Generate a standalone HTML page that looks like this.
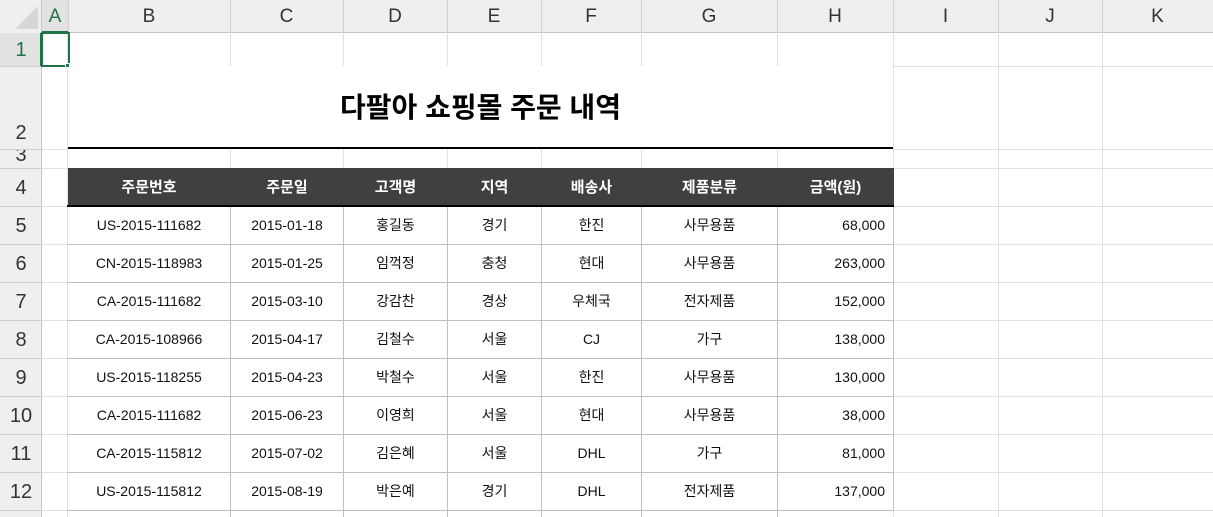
<!DOCTYPE html>
<html><head><meta charset="utf-8"><style>
*{margin:0;padding:0;box-sizing:border-box}
html,body{width:1213px;height:517px;overflow:hidden}
body{background:#fff;position:relative;font-family:"Liberation Sans","Noto Sans CJK KR",sans-serif}
.a{position:absolute}
.vl{position:absolute;width:1px;background:#e1e1e1}
.hl{position:absolute;height:1px;background:#e1e1e1}
.ch{position:absolute;top:0;height:33px;line-height:34px;text-align:center;font-size:19px;color:#333;font-family:"Liberation Sans",sans-serif}
.rh{position:absolute;left:0;width:42px;text-align:center;font-size:20px;color:#333;font-family:"Liberation Sans",sans-serif}
table{position:absolute;left:67px;top:168px;border-collapse:collapse;table-layout:fixed}
td{height:38px;border:1px solid #bfbfbf;text-align:center;font-size:14px;color:#111;padding:0}
td:last-child{text-align:right;padding-right:8px}
td:first-child{border-left-color:#e1e1e1}
th{height:38px;background:#404040;color:#fff;font-size:15px;font-weight:bold;border-bottom:2px solid #000}
</style></head><body>
<div class="a" style="left:0;top:0;width:1213px;height:33px;background:#efefef;border-bottom:1px solid #c6c6c6"></div>
<div class="a" style="left:0;top:0;width:42px;height:517px;background:#efefef;border-right:1px solid #c6c6c6"></div>
<div class="a" style="left:42px;top:0;width:26px;height:33px;background:#e2e2e2;border-bottom:2px solid #217346"></div>
<div class="a" style="left:0;top:33px;width:42px;height:33px;background:#e2e2e2;border-right:2px solid #217346"></div>
<svg class="a" style="left:12px;top:4px" width="28" height="26"><polygon points="26,2 26,25 3,25" fill="#d6d6d6"/></svg>
<div class="ch" style="left:42px;width:26px;color:#217346">A</div>
<div class="ch" style="left:68px;width:162px">B</div>
<div class="ch" style="left:230px;width:113px">C</div>
<div class="ch" style="left:343px;width:104px">D</div>
<div class="ch" style="left:447px;width:94px">E</div>
<div class="ch" style="left:541px;width:100px">F</div>
<div class="ch" style="left:641px;width:136px">G</div>
<div class="ch" style="left:777px;width:116px">H</div>
<div class="ch" style="left:893px;width:105px">I</div>
<div class="ch" style="left:998px;width:104px">J</div>
<div class="ch" style="left:1102px;width:111px">K</div>
<div class="a" style="left:68px;top:0;width:1px;height:33px;background:#d0d0d0"></div>
<div class="a" style="left:230px;top:0;width:1px;height:33px;background:#d0d0d0"></div>
<div class="a" style="left:343px;top:0;width:1px;height:33px;background:#d0d0d0"></div>
<div class="a" style="left:447px;top:0;width:1px;height:33px;background:#d0d0d0"></div>
<div class="a" style="left:541px;top:0;width:1px;height:33px;background:#d0d0d0"></div>
<div class="a" style="left:641px;top:0;width:1px;height:33px;background:#d0d0d0"></div>
<div class="a" style="left:777px;top:0;width:1px;height:33px;background:#d0d0d0"></div>
<div class="a" style="left:893px;top:0;width:1px;height:33px;background:#d0d0d0"></div>
<div class="a" style="left:998px;top:0;width:1px;height:33px;background:#d0d0d0"></div>
<div class="a" style="left:1102px;top:0;width:1px;height:33px;background:#d0d0d0"></div>
<div class="rh" style="top:33px;height:33px;line-height:34px;color:#217346">1</div>
<div class="rh" style="top:66px;height:83px;line-height:134px">2</div>
<div class="rh" style="top:149px;height:19px;line-height:12px;overflow:hidden">3</div>
<div class="rh" style="top:168px;height:38px;line-height:40px">4</div>
<div class="rh" style="top:206px;height:38px;line-height:40px">5</div>
<div class="rh" style="top:244px;height:38px;line-height:40px">6</div>
<div class="rh" style="top:282px;height:38px;line-height:40px">7</div>
<div class="rh" style="top:320px;height:38px;line-height:40px">8</div>
<div class="rh" style="top:358px;height:38px;line-height:40px">9</div>
<div class="rh" style="top:396px;height:38px;line-height:40px">10</div>
<div class="rh" style="top:434px;height:38px;line-height:40px">11</div>
<div class="rh" style="top:472px;height:38px;line-height:40px">12</div>
<div class="a" style="left:0;top:66px;width:42px;height:1px;background:#d0d0d0"></div>
<div class="a" style="left:0;top:149px;width:42px;height:1px;background:#d0d0d0"></div>
<div class="a" style="left:0;top:168px;width:42px;height:1px;background:#d0d0d0"></div>
<div class="a" style="left:0;top:206px;width:42px;height:1px;background:#d0d0d0"></div>
<div class="a" style="left:0;top:244px;width:42px;height:1px;background:#d0d0d0"></div>
<div class="a" style="left:0;top:282px;width:42px;height:1px;background:#d0d0d0"></div>
<div class="a" style="left:0;top:320px;width:42px;height:1px;background:#d0d0d0"></div>
<div class="a" style="left:0;top:358px;width:42px;height:1px;background:#d0d0d0"></div>
<div class="a" style="left:0;top:396px;width:42px;height:1px;background:#d0d0d0"></div>
<div class="a" style="left:0;top:434px;width:42px;height:1px;background:#d0d0d0"></div>
<div class="a" style="left:0;top:472px;width:42px;height:1px;background:#d0d0d0"></div>
<div class="a" style="left:0;top:510px;width:42px;height:1px;background:#d0d0d0"></div>
<div class="vl" style="left:68px;top:33px;height:33px"></div>
<div class="vl" style="left:230px;top:33px;height:33px"></div><div class="vl" style="left:230px;top:149px;height:19px"></div>
<div class="vl" style="left:343px;top:33px;height:33px"></div><div class="vl" style="left:343px;top:149px;height:19px"></div>
<div class="vl" style="left:447px;top:33px;height:33px"></div><div class="vl" style="left:447px;top:149px;height:19px"></div>
<div class="vl" style="left:541px;top:33px;height:33px"></div><div class="vl" style="left:541px;top:149px;height:19px"></div>
<div class="vl" style="left:641px;top:33px;height:33px"></div><div class="vl" style="left:641px;top:149px;height:19px"></div>
<div class="vl" style="left:777px;top:33px;height:33px"></div><div class="vl" style="left:777px;top:149px;height:19px"></div>
<div class="vl" style="left:67px;top:33px;height:484px"></div>
<div class="vl" style="left:893px;top:33px;height:484px"></div>
<div class="vl" style="left:998px;top:33px;height:484px"></div>
<div class="vl" style="left:1102px;top:33px;height:484px"></div>
<div class="hl" style="left:42px;top:66px;width:1171px"></div>
<div class="hl" style="left:893px;top:149px;width:320px"></div>
<div class="hl" style="left:42px;top:168px;width:1171px"></div>
<div class="hl" style="left:42px;top:206px;width:1171px"></div>
<div class="hl" style="left:42px;top:244px;width:1171px"></div>
<div class="hl" style="left:42px;top:282px;width:1171px"></div>
<div class="hl" style="left:42px;top:320px;width:1171px"></div>
<div class="hl" style="left:42px;top:358px;width:1171px"></div>
<div class="hl" style="left:42px;top:396px;width:1171px"></div>
<div class="hl" style="left:42px;top:434px;width:1171px"></div>
<div class="hl" style="left:42px;top:472px;width:1171px"></div>
<div class="hl" style="left:42px;top:510px;width:1171px"></div>
<div class="hl" style="left:42px;top:149px;width:26px"></div>
<div class="a" style="left:68px;top:66px;width:825px;height:81px;background:#fff;text-align:center;font-size:28px;font-weight:bold;line-height:84px;color:#000">다팔아 쇼핑몰 주문 내역</div>
<div class="a" style="left:68px;top:147px;width:825px;height:2px;background:#000"></div>
<div class="a" style="left:41px;top:32px;width:29px;height:35px;border:2px solid #217346"></div>
<div class="a" style="left:65px;top:63px;width:5px;height:5px;background:#217346;border:1px solid #fff"></div>
<table>
<colgroup><col style="width:163px"><col style="width:113px"><col style="width:104px"><col style="width:94px"><col style="width:100px"><col style="width:136px"><col style="width:116px"></colgroup>
<tr><th>주문번호</th><th>주문일</th><th>고객명</th><th>지역</th><th>배송사</th><th>제품분류</th><th>금액(원)</th></tr>
<tr><td>US-2015-111682</td><td>2015-01-18</td><td>홍길동</td><td>경기</td><td>한진</td><td>사무용품</td><td>68,000</td></tr>
<tr><td>CN-2015-118983</td><td>2015-01-25</td><td>임꺽정</td><td>충청</td><td>현대</td><td>사무용품</td><td>263,000</td></tr>
<tr><td>CA-2015-111682</td><td>2015-03-10</td><td>강감찬</td><td>경상</td><td>우체국</td><td>전자제품</td><td>152,000</td></tr>
<tr><td>CA-2015-108966</td><td>2015-04-17</td><td>김철수</td><td>서울</td><td>CJ</td><td>가구</td><td>138,000</td></tr>
<tr><td>US-2015-118255</td><td>2015-04-23</td><td>박철수</td><td>서울</td><td>한진</td><td>사무용품</td><td>130,000</td></tr>
<tr><td>CA-2015-111682</td><td>2015-06-23</td><td>이영희</td><td>서울</td><td>현대</td><td>사무용품</td><td>38,000</td></tr>
<tr><td>CA-2015-115812</td><td>2015-07-02</td><td>김은혜</td><td>서울</td><td>DHL</td><td>가구</td><td>81,000</td></tr>
<tr><td>US-2015-115812</td><td>2015-08-19</td><td>박은예</td><td>경기</td><td>DHL</td><td>전자제품</td><td>137,000</td></tr>
</table>
<div class="a" style="left:230px;top:510px;width:1px;height:7px;background:#bfbfbf"></div>
<div class="a" style="left:343px;top:510px;width:1px;height:7px;background:#bfbfbf"></div>
<div class="a" style="left:447px;top:510px;width:1px;height:7px;background:#bfbfbf"></div>
<div class="a" style="left:541px;top:510px;width:1px;height:7px;background:#bfbfbf"></div>
<div class="a" style="left:641px;top:510px;width:1px;height:7px;background:#bfbfbf"></div>
<div class="a" style="left:777px;top:510px;width:1px;height:7px;background:#bfbfbf"></div>
</body></html>
